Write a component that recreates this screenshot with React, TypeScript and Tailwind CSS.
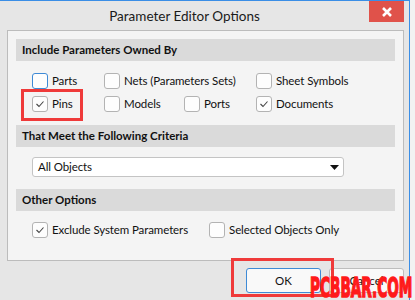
import React from "react";

const font = { fontFamily: 'Lato, "Liberation Sans", sans-serif' };

const Check: React.FC<{ checked?: boolean; focused?: boolean; label: string }> = ({
  checked,
  focused,
  label,
}) => (
  <div className="flex items-center h-[23px]">
    <div
      className={
        "w-[16px] h-[16px] rounded-[3px] border bg-[#fdfdfd] flex items-center justify-center " +
        (focused ? "border-[#3e8ad6]" : "border-[#b3b3b3]")
      }
    >
      {checked && (
        <svg width="14" height="14" viewBox="0 0 14 14">
          <polyline points="3.5,7 6,9.5 10.5,4.5" fill="none" stroke="#444" strokeWidth="1.1" />
        </svg>
      )}
    </div>
    <span className="ml-[4px] text-[11.5px] tracking-[-0.1px] text-[#111] whitespace-nowrap">{label}</span>
  </div>
);

const Header: React.FC<{ title: string }> = ({ title }) => (
  <div className="h-[22px] bg-[#dadada] px-[6px] flex items-center text-[11.5px] font-bold text-[#111]">
    {title}
  </div>
);

export default function App() {
  return (
    <div className="w-[415px] h-[300px] bg-[#f2f2f2] relative overflow-hidden" style={font}>
      <div className="w-[410px] h-[300px] bg-[#e6e6e6] border-t border-r border-[#3a8ee6]">
        {/* title bar */}
        <div className="h-[29px] flex">
          <div className="flex-1 text-center text-[13.5px] text-[#1a1a1a] pt-[5px]">
            Parameter Editor Options
          </div>
          <div className="w-[35px] h-[21px] mr-[5px] bg-[#e0524a] flex items-center justify-center">
            <svg width="10" height="10" viewBox="0 0 10 10">
              <path d="M1 1 L9 9 M9 1 L1 9" stroke="#fff" strokeWidth="2.6" />
            </svg>
          </div>
        </div>

        {/* main panel */}
        <div className="ml-[7px] w-[397px] h-[231px] border border-[#bcbcbc] bg-[#f4f4f4] p-[8px]">
          <Header title="Include Parameters Owned By" />
          <div className="pt-[8px] pl-[16px] grid grid-cols-[72px_80px_72px_auto]">
            <Check focused label="Parts" />
            <div className="col-span-2">
              <Check label="Nets (Parameters Sets)" />
            </div>
            <Check label="Sheet Symbols" />
            <Check checked label="Pins" />
            <Check label="Models" />
            <Check label="Ports" />
            <Check checked label="Documents" />
          </div>

          <div className="mt-[10px]">
            <Header title="That Meet the Following Criteria" />
          </div>
          <div className="mt-[10px] ml-[16px] w-[312px] h-[20px] bg-white border border-[#c4c4c4] rounded-[3px] flex items-center justify-between pl-[5px] pr-[4px]">
            <span className="text-[11.5px] tracking-[-0.1px] text-[#111]">All Objects</span>
            <svg width="9" height="5" viewBox="0 0 9 5">
              <path d="M0 0 L9 0 L4.5 5 Z" fill="#111" />
            </svg>
          </div>

          <div className="mt-[12px]">
            <Header title="Other Options" />
          </div>
          <div className="mt-[7px] pl-[16px] flex gap-[21px]">
            <Check checked label="Exclude System Parameters" />
            <Check label="Selected Objects Only" />
          </div>
        </div>

        {/* buttons */}
        <div className="mt-[7px] flex justify-end gap-[8px] pr-[5px]">
          <div className="w-[75px] h-[25px] rounded-[3px] border border-[#3e8ad6] bg-[#f9f9f9] flex items-center justify-center text-[11.5px] text-[#111]">
            OK
          </div>
          <div className="w-[75px] h-[25px] rounded-[3px] border border-[#bdbdbd] bg-[#f9f9f9] flex items-center justify-center text-[11.5px] text-[#111]">
            Cancel
          </div>
        </div>
      </div>

      {/* annotation overlays */}
      <div className="absolute left-[21px] top-[89px] w-[62px] h-[32px] border-[3px] border-[#ef3a3a]" />
      <div className="absolute left-[231px] top-[258px] w-[103px] h-[39px] border-[3px] border-[#ef3a3a]" />
      <div
        className="absolute left-[310px] top-[274px] text-[27px] font-bold text-[#ff1a1a] leading-none whitespace-nowrap origin-left scale-x-[0.505] [-webkit-text-stroke:1.6px_#ff1a1a]"
        style={{ fontFamily: '"DejaVu Sans", sans-serif' }}
      >
        PCBBAR.COM
      </div>
    </div>
  );
}
